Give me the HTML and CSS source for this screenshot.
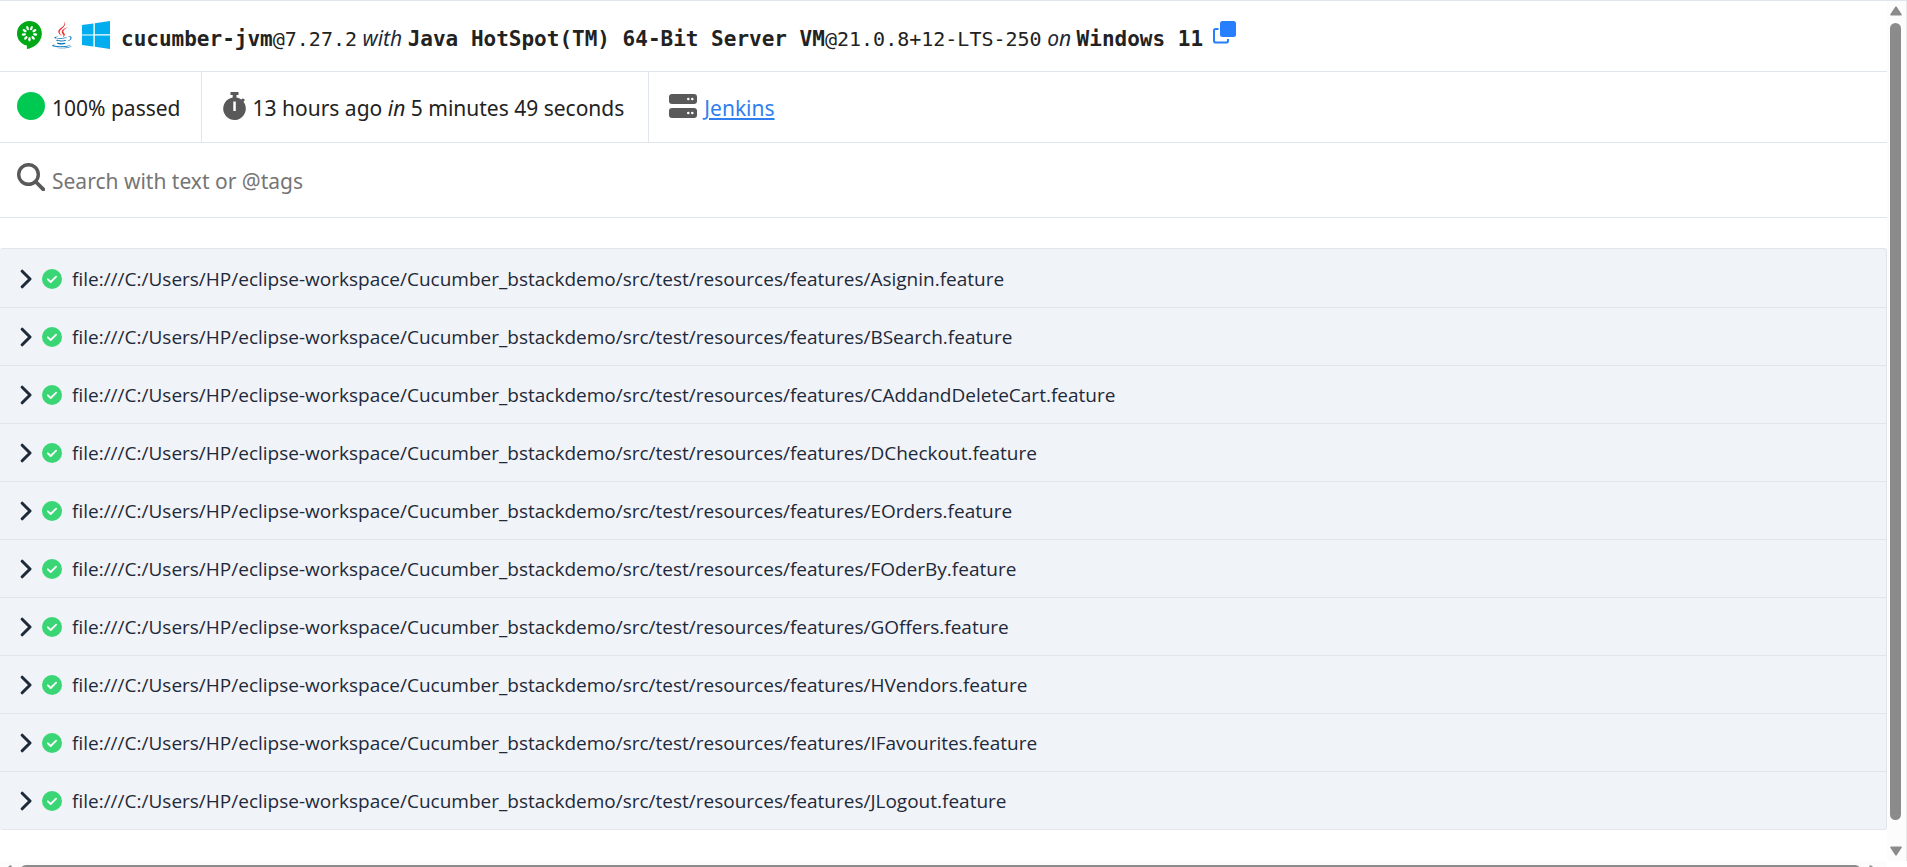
FILE: index.html
```html
<!DOCTYPE html>
<html lang="en">
<head>
<meta charset="utf-8">
<title>Cucumber Report</title>
<link rel="stylesheet" href="styles.css">
</head>
<body>
<svg class="defs" aria-hidden="true">
  <symbol id="chevron" viewBox="0 0 12 20"><path d="M2.2 2.2 10 10l-7.8 7.8" fill="none" stroke="currentColor" stroke-width="3" stroke-linecap="round" stroke-linejoin="round"/></symbol>
  <symbol id="passed" viewBox="0 0 20 20"><circle cx="10" cy="10" r="10" fill="#3ad676"/><path d="m5.9 10.3 2.8 2.7 5.4-5.4" fill="none" stroke="#fff" stroke-width="1.8" stroke-linecap="round" stroke-linejoin="round"/></symbol>
</svg>
<div class="frame">
  <main class="report">
    <section class="row setup">
      <div class="logos">
        <svg class="logo-cucumber" viewBox="0 0 25 28" role="img" aria-label="cucumber-jvm">
          <path d="M12.5 0C5.6 0 0 5.6 0 12.4c0 6 4.200 10.900 9.900 12.100V28c7.400-1.100 14.400-6.800 14.900-14.500C25.300 5.900 19.500 0 12.500 0z" fill="#00a818"/>
          <g fill="#fff">
            <ellipse cx="12.500" cy="6.800" rx="1.200" ry="2.200" transform="rotate(20 12.500 12.500)"/>
            <ellipse cx="12.500" cy="6.800" rx="1.200" ry="2.200" transform="rotate(60 12.500 12.500)"/>
            <ellipse cx="12.500" cy="6.800" rx="1.200" ry="2.200" transform="rotate(100 12.500 12.500)"/>
            <ellipse cx="12.500" cy="6.800" rx="1.200" ry="2.200" transform="rotate(140 12.500 12.500)"/>
            <ellipse cx="12.500" cy="6.800" rx="1.200" ry="2.200" transform="rotate(180 12.500 12.500)"/>
            <ellipse cx="12.500" cy="6.800" rx="1.200" ry="2.200" transform="rotate(220 12.500 12.500)"/>
            <ellipse cx="12.500" cy="6.800" rx="1.200" ry="2.200" transform="rotate(260 12.500 12.500)"/>
            <ellipse cx="12.500" cy="6.800" rx="1.200" ry="2.200" transform="rotate(300 12.500 12.500)"/>
            <ellipse cx="12.500" cy="6.800" rx="1.200" ry="2.200" transform="rotate(340 12.500 12.500)"/>
          </g>
        </svg>
        <svg class="logo-java" viewBox="18 0 94 128" role="img" aria-label="Java">
          <path fill="#0074bd" d="M47.617 98.12s-4.767 2.774 3.397 3.71c9.892 1.13 14.947.968 25.845-1.092 0 0 2.871 1.795 6.873 3.351-24.439 10.47-55.308-.607-36.115-5.969zm-2.988-13.665s-5.348 3.959 2.823 4.805c10.567 1.091 18.91 1.18 33.354-1.6 0 0 1.993 2.025 5.132 3.131-29.542 8.64-62.446.68-41.309-6.336z"/>
          <path fill="#ea2d2e" d="M69.802 61.271c6.025 6.935-1.58 13.17-1.58 13.17s15.289-7.891 8.269-17.777c-6.559-9.215-11.587-13.792 15.635-29.58 0 .001-42.731 10.67-22.324 34.187z"/>
          <path fill="#0074bd" d="M102.123 108.229s3.529 2.91-3.888 5.159c-14.102 4.272-58.706 5.56-71.094.171-4.451-1.938 3.899-4.625 6.526-5.192 2.739-.593 4.303-.485 4.303-.485-4.953-3.487-32.013 6.850-13.743 9.815 49.821 8.076 90.817-3.637 77.896-9.468zM49.912 70.294s-22.686 5.389-8.033 7.348c6.188.828 18.518.638 30.011-.326 9.390-.789 18.813-2.474 18.813-2.474s-3.308 1.419-5.704 3.053c-23.042 6.061-67.544 3.238-54.731-2.958 10.832-5.239 19.644-4.643 19.644-4.643zM90.609 93.041c23.421-12.167 12.591-23.860 5.032-22.285-1.848.385-2.677.720-2.677.720s.688-1.079 2-1.543c14.953-5.255 26.451 15.503-4.823 23.725 0-.002.359-.327.468-.617z"/>
          <path fill="#ea2d2e" d="M76.491 1.587s12.968 12.976-12.303 32.923c-20.266 16.006-4.621 25.130-.007 35.559-11.831-10.673-20.509-20.070-14.688-28.815C58.041 28.420 81.722 22.195 76.491 1.587z"/>
          <path fill="#0074bd" d="M52.214 126.021c22.476 1.437 57-.8 57.817-11.436 0 0-1.571 4.032-18.577 7.231-19.186 3.612-42.854 3.191-56.887.874 0 .001 2.875 2.381 17.647 3.331z"/>
        </svg>
        <svg class="logo-windows" viewBox="0 0 28 28" role="img" aria-label="Windows"><path fill="#00adef" d="M0 4 11.400 2.400v11H0zM12.800 2.200 28 0v13.300H12.800zM0 14.600h11.400v11L0 24zM12.800 14.600H28V28l-15.200-2.200z"/></svg>
      </div>
      <p class="versions"><code><b>cucumber-jvm</b>@7.27.2</code> <i>with</i> <code><b>Java HotSpot(TM) 64-Bit Server VM</b>@21.0.8+12-LTS-250</code> <i>on</i> <code><b>Windows 11</b></code></p>
      <button class="copy" type="button" aria-label="Copy"><svg viewBox="0 0 23 23"><rect x="7" width="16" height="16" rx="2.500" fill="#267fff"/><path d="M5.500 8H2.800Q1 8 1 9.800v9.900Q1 21.500 2.800 21.500h10.400q1.800 0 1.800-1.800V18" fill="none" stroke="#267fff" stroke-width="2"/></svg></button>
    </section>
    <section class="row stats">
      <div class="stat"><svg viewBox="0 0 28 28"><circle cx="14" cy="14" r="14" fill="#00c951"/></svg><span>100% passed</span></div>
      <div class="stat timing"><svg class="watch" viewBox="0 0 23 28"><path fill="#595959" fill-rule="evenodd" d="M7.500 0h8v3h-2v2.400a11.300 11.300 0 0 1 5 2l1.300-1.200 2.200 1.700-1.500 1.900a11.300 11.300 0 1 1-10.800-4.300V3H7.500zM10.300 9.500h2.500v9.500h-2.500z"/></svg><span>13 hours ago <i>in</i> 5 minutes 49 seconds</span></div>
      <div class="stat"><svg viewBox="0 0 28 28"><g fill="#595959"><rect y="2" width="28" height="10" rx="3"/><rect y="16" width="28" height="10" rx="3"/></g><g fill="#fff"><circle cx="19.300" cy="7" r="1.300"/><circle cx="23.300" cy="7" r="1.300"/><circle cx="19.300" cy="21" r="1.300"/><circle cx="23.300" cy="21" r="1.300"/></g></svg><a href="#jenkins">Jenkins</a></div>
    </section>
    <form class="row search">
      <label for="query" aria-label="Search"><svg viewBox="0 0 28 28" fill="none" stroke="#595959"><circle cx="11.500" cy="11.500" r="9.800" stroke-width="3.400"/><path d="m18.500 18.500 7.800 7.800" stroke-width="3.800" stroke-linecap="round"/></svg></label>
      <input id="query" type="text" placeholder="Search with text or @tags">
    </form>
    <div class="features">
      <button type="button"><svg class="chevron"><use href="#chevron"/></svg><svg class="passed"><use href="#passed"/></svg><span>file:///C:/Users/HP/eclipse-workspace/Cucumber_bstackdemo/src/test/resources/features/Asignin.feature</span></button>
      <button type="button"><svg class="chevron"><use href="#chevron"/></svg><svg class="passed"><use href="#passed"/></svg><span>file:///C:/Users/HP/eclipse-workspace/Cucumber_bstackdemo/src/test/resources/features/BSearch.feature</span></button>
      <button type="button"><svg class="chevron"><use href="#chevron"/></svg><svg class="passed"><use href="#passed"/></svg><span>file:///C:/Users/HP/eclipse-workspace/Cucumber_bstackdemo/src/test/resources/features/CAddandDeleteCart.feature</span></button>
      <button type="button"><svg class="chevron"><use href="#chevron"/></svg><svg class="passed"><use href="#passed"/></svg><span>file:///C:/Users/HP/eclipse-workspace/Cucumber_bstackdemo/src/test/resources/features/DCheckout.feature</span></button>
      <button type="button"><svg class="chevron"><use href="#chevron"/></svg><svg class="passed"><use href="#passed"/></svg><span>file:///C:/Users/HP/eclipse-workspace/Cucumber_bstackdemo/src/test/resources/features/EOrders.feature</span></button>
      <button type="button"><svg class="chevron"><use href="#chevron"/></svg><svg class="passed"><use href="#passed"/></svg><span>file:///C:/Users/HP/eclipse-workspace/Cucumber_bstackdemo/src/test/resources/features/FOderBy.feature</span></button>
      <button type="button"><svg class="chevron"><use href="#chevron"/></svg><svg class="passed"><use href="#passed"/></svg><span>file:///C:/Users/HP/eclipse-workspace/Cucumber_bstackdemo/src/test/resources/features/GOffers.feature</span></button>
      <button type="button"><svg class="chevron"><use href="#chevron"/></svg><svg class="passed"><use href="#passed"/></svg><span>file:///C:/Users/HP/eclipse-workspace/Cucumber_bstackdemo/src/test/resources/features/HVendors.feature</span></button>
      <button type="button"><svg class="chevron"><use href="#chevron"/></svg><svg class="passed"><use href="#passed"/></svg><span>file:///C:/Users/HP/eclipse-workspace/Cucumber_bstackdemo/src/test/resources/features/IFavourites.feature</span></button>
      <button type="button"><svg class="chevron"><use href="#chevron"/></svg><svg class="passed"><use href="#passed"/></svg><span>file:///C:/Users/HP/eclipse-workspace/Cucumber_bstackdemo/src/test/resources/features/JLogout.feature</span></button>
    </div>
  </main>
  <div class="vscroll" aria-hidden="true">
    <svg viewBox="0 0 12 10"><path d="M6 1.200 11 8.800H1z" fill="#8b8b8b" stroke="#8b8b8b" stroke-width="1.600" stroke-linejoin="round"/></svg>
    <div class="thumb"></div>
    <svg class="down" viewBox="0 0 12 10"><path d="M6 8.800 11 1.200H1z" fill="#8b8b8b" stroke="#8b8b8b" stroke-width="1.600" stroke-linejoin="round"/></svg>
  </div>
  <div class="hscroll" aria-hidden="true">
    <svg viewBox="0 0 10 12"><path d="M1.200 6 8.800 1v10z" fill="#8b8b8b" stroke="#8b8b8b" stroke-width="1.600" stroke-linejoin="round"/></svg>
    <div class="thumb"></div>
    <svg viewBox="0 0 10 12"><path d="M8.800 6 1.200 1v10z" fill="#8b8b8b" stroke="#8b8b8b" stroke-width="1.600" stroke-linejoin="round"/></svg>
  </div>
</div>
</body>
</html>
```
FILE: styles.css
```css
* { box-sizing: border-box; }
body {
  margin: 0;
  overflow: hidden;
  background: #fff;
  color: #222;
  font-family: "Segoe UI", "Noto Sans", sans-serif;
  font-size: 21px;
  line-height: 28px;
}
svg { display: block; flex: none; }
button { font: inherit; color: inherit; border: 0; background: none; padding: 0; text-align: left; cursor: pointer; }
.defs { position: absolute; width: 0; height: 0; }

.frame {
  display: grid;
  grid-template-columns: minmax(0, 1fr) 20px;
  grid-template-rows: minmax(0, 1fr) 6px;
  height: 100vh;
  overflow: hidden;
  border-top: 1px solid #e1e6ec;
}
.report { overflow: hidden; }
.row { display: flex; border-bottom: 1px solid #e1e6ec; }

.setup { padding: 20px 17px 19px; }
.logos { display: flex; gap: 10px; margin-right: 11px; }
.logos svg { height: 28px; }
.logo-cucumber { width: 25px; }
.logo-java { width: 20px; }
.logo-windows { width: 28px; }
.versions { margin: 3px 10px 0 0; white-space: nowrap; }
.versions i { color: #1e2939; }
code { font-family: Consolas, "DejaVu Sans Mono", monospace; font-size: 20px; line-height: 1; }
code b { font-size: 21px; }
.copy { align-self: flex-start; }
.copy svg { width: 23px; height: 23px; }

.stat { display: flex; gap: 7px; padding: 20px 20px 20px 17px; }
.stat + .stat { border-left: 1px solid #e1e6ec; padding-left: 20px; }
.stat.timing { padding-left: 21px; padding-right: 24px; }
.stat svg { width: 28px; height: 28px; }
.stat .watch { width: 23px; }
.stat span, .stat a { padding-top: 2px; }
.stat a { color: #2f7fee; text-decoration-thickness: 2px; text-underline-offset: 2px; }

.search { gap: 7px; padding: 20px 17px 18px; }
.search svg { width: 28px; height: 28px; }
.search input { flex: 1; border: 0; padding: 0; outline: 0; font: inherit; height: 36px; background: none; }
.search input::placeholder { color: #757575; opacity: 1; }

.features { margin-top: 30px; border: 1px solid #e1e6ec; border-left: 0; border-radius: 3px; background: #f0f3f8; color: #1e2939; }
.features button { display: flex; align-items: center; width: 100%; height: 58px; padding: 1px 20px 0; font-family: "Segoe UI", "Open Sans", sans-serif; font-size: 19px; }
.features button + button { border-top: 1px solid #e1e6ec; }
.chevron { width: 12px; height: 20px; margin-right: 10px; }
.passed { width: 20px; height: 20px; margin-right: 10px; }

.vscroll { display: flex; flex-direction: column; align-items: flex-start; gap: 7px; padding: 5px 4px 5px 3px; background: #fcfcfc; border-right: 1px solid #e8e8e8; }
.vscroll svg { width: 12px; height: 10px; }
.thumb { flex: 1; background: #8b8b8b; border-radius: 6px; }
.vscroll .thumb { width: 11px; }
.down { margin-top: 19px; }
.hscroll { display: flex; gap: 8px; height: 20px; padding: 4px 8px 4px 2px; background: #fcfcfc; }
.hscroll svg { width: 10px; height: 12px; }
.hscroll .thumb { height: 12px; }
```
